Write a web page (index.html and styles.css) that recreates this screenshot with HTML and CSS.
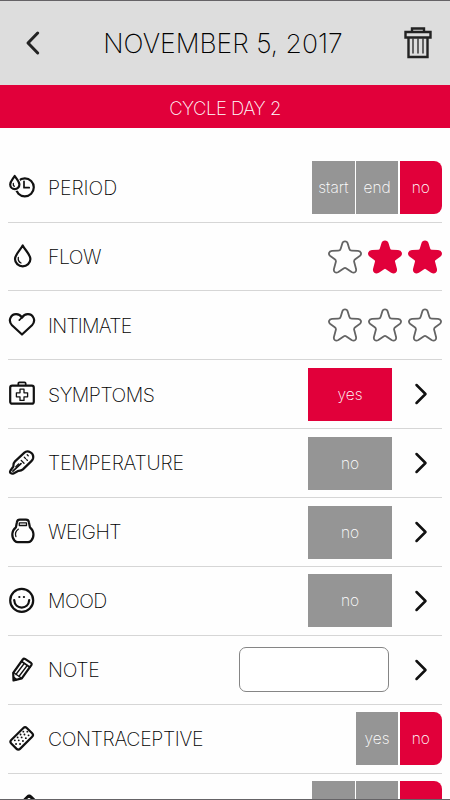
FILE: index.html
```
<!doctype html>
<html lang="en">
<head>
  <meta charset="UTF-8">
  <meta name="viewport" content="width=device-width, initial-scale=1.0">
  <title>Cycle day</title>
  <link rel="stylesheet" href="styles.css">
</head>
<body>
<!-- Shapes used in several rows -->
<svg class="sprite">
  <symbol id="star" viewBox="0 0 34 34">
    <path d="M14.3 3.4C15.1.6 18.9.6 19.7 3.4L21.3 8.8Q21.8 10.7 23.8 10.7L30 10.9C33.2 11.2 34 14.2 31.7 16L27.2 19.2Q25.7 20.3 26.2 22.1L28 28.8C28.8 31.8 26.4 33.6 23.6 32L18.4 28.4Q17 27.5 15.6 28.4L10.4 32C7.6 33.6 5.2 31.8 6 28.8L7.8 22.1Q8.3 20.3 6.8 19.2L2.3 16C0 14.2.8 11.2 4 10.9L10.2 10.7Q12.2 10.7 12.7 8.8Z"/>
  </symbol>
  <symbol id="next" viewBox="0 0 14 22">
    <path d="M2.500 2 11.500 11 2.500 20"/>
  </symbol>
</svg>

<div class="screen">
  <header class="header">
    <svg class="header__back" viewBox="0 0 16 26"><path d="M12.700 3 3 13l9.700 10"/></svg>
    <h1 class="header__title">NOVEMBER 5, 2017</h1>
    <svg class="header__trash" viewBox="0 0 30 34">
      <path d="M9 6V2.500h12V6M2.500 6h25v5.500h-25zM5.500 11.500h19v19.500h-19z"/>
      <path class="thin" d="M10 13v14M15 13v14M20 13v14"/>
    </svg>
  </header>
  <div class="cycle">CYCLE DAY 2</div>

  <ul class="list">
    <li class="row">
      <svg class="icon" viewBox="0 0 28 28">
        <circle cx="16.800" cy="13.300" r="9"/>
        <path class="halo" d="M6.700 2C5 5 2.200 7.500 2.200 10.500a4.600 4.600 0 0 0 9.200 0C11.400 7.500 8.500 5 6.700 2z"/>
        <path d="M6.700 2C5 5 2.200 7.500 2.200 10.500a4.600 4.600 0 0 0 9.200 0C11.400 7.500 8.500 5 6.700 2z"/>
        <path class="thin" d="M5.300 9.500q-.3 2 1 2.800"/>
        <path class="mid" d="M16 7.300v6.400h5.200"/>
      </svg>
      <span class="row__label period">PERIOD</span>
      <div class="group">
        <span class="btn">start</span>
        <span class="btn">end</span>
        <span class="btn btn--on">no</span>
      </div>
    </li>
    <li class="row">
      <svg class="icon" viewBox="0 0 28 28">
        <path d="M14.700 2.400C12.500 7 7 11.600 7 16a7.700 7.300 0 0 0 15.400 0C22.400 11.600 17 7 14.700 2.400z"/>
        <path class="thin" d="M10.300 14.500q-.5 4 2.700 5.500"/>
      </svg>
      <span class="row__label">FLOW</span>
      <div class="stars">
        <svg class="star"><use href="#star"/></svg>
        <svg class="star star--on"><use href="#star"/></svg>
        <svg class="star star--on"><use href="#star"/></svg>
      </div>
    </li>
    <li class="row">
      <svg class="icon" viewBox="0 0 28 28">
        <path d="M14 23.500 4 14.200C-.5 9.500 3 3 8.200 3.100c2.600 0 4.500 1.300 5.800 3.500 1.300-2.200 3.200-3.500 5.800-3.500C25 3 28.500 9.500 24 14.200z"/>
        <path class="mid" d="M14 6.500 11.300 9.200"/>
      </svg>
      <span class="row__label intimate">INTIMATE</span>
      <div class="stars">
        <svg class="star"><use href="#star"/></svg>
        <svg class="star"><use href="#star"/></svg>
        <svg class="star"><use href="#star"/></svg>
      </div>
    </li>
    <li class="row">
      <svg class="icon" viewBox="0 0 28 28">
        <rect x="2.200" y="5.700" width="23.600" height="18" rx="2"/>
        <path class="mid" d="M10.300 5V3.500q0-1.200 1.200-1.200h5q1.200 0 1.200 1.200V5"/>
        <path class="thin" d="M12 9.200h4v3.600h3.600v4H16v3.600h-4v-3.600H8.400v-4H12z"/>
      </svg>
      <span class="row__label">SYMPTOMS</span>
      <span class="btn btn--wide btn--on">yes</span>
      <svg class="next"><use href="#next"/></svg>
    </li>
    <li class="row">
      <svg class="icon" viewBox="0 0 28 28">
        <path d="M2.500 21.500 5.400 17.500Q5.200 14.200 7 12.400L16.400 3.600c3.300-3 10.100.4 8.600 6-.3 1-1 1.900-1.600 2.500L14.900 20.400q-1.700 1.500-4.400 1.400L6 24.200c-2.500 1.300-4.900-.5-3.500-2.700z"/>
        <path class="mid" d="M4.900 22.200 13 14.600"/>
        <path class="thin" d="M7.800 17.800l2.800-2.800M13.200 11.400l2.800 2.900M16.300 8.300l1.300 1.300M18.700 10.700l.7.700M19.200 5.800l1 1"/>
      </svg>
      <span class="row__label temperature">TEMPERATURE</span>
      <span class="btn btn--wide">no</span>
      <svg class="next"><use href="#next"/></svg>
    </li>
    <li class="row">
      <svg class="icon" viewBox="0 0 28 28">
        <path d="M7.900 9.300 8.900 4.200Q9.300 1.700 11.800 1.700h6.200q2.500 0 2.900 2.500l1 5.100c4.400 3.500 4.700 9.800 1.100 13.600-.9.900-1.800 1.300-3 1.300H9.800c-1.200 0-2.100-.4-3-1.300C3.200 19.100 3.400 12.800 7.900 9.300z"/>
        <path class="thin" d="M11.300 4.900h7.200v2.600h-7.200zM10.300 11.200C7.400 13.200 7 16 7.900 18.600"/>
      </svg>
      <span class="row__label">WEIGHT</span>
      <span class="btn btn--wide">no</span>
      <svg class="next"><use href="#next"/></svg>
    </li>
    <li class="row">
      <svg class="icon" viewBox="0 0 28 28">
        <circle cx="13.700" cy="13.400" r="11.500"/>
        <path d="M6.200 13.200c.7 9.800 14.300 9.800 15 0"/>
        <path d="M11.300 10h.1M15.900 10h.1"/>
      </svg>
      <span class="row__label">MOOD</span>
      <span class="btn btn--wide">no</span>
      <svg class="next"><use href="#next"/></svg>
    </li>
    <li class="row">
      <svg class="icon" viewBox="0 0 28 28">
        <path d="M5.200 16.800 14.800 3.500q.8-1.200 2.200-.6l6 3.900q1.200.9.500 2.100L13.800 22.400 5.500 24.500z"/>
        <path class="mid" d="M13.700 5.500 21.900 11.200M5.800 21.300l2.700 2.400"/>
        <path class="thin" d="M5.600 16.500l8 5.700M16.200 7.500 7.900 18.500M19.200 9.500l-8.300 11"/>
      </svg>
      <span class="row__label note">NOTE</span>
      <span class="field"></span>
      <svg class="next"><use href="#next"/></svg>
    </li>
    <li class="row">
      <svg class="icon" viewBox="0 0 28 28">
        <rect x="2.700" y="7.200" width="22" height="12.400" rx="2.400" transform="rotate(-45 13.700 13.400)"/>
        <path class="dots" d="M15.300 6.700h.1M19.300 6.700h.1M12.500 9.500h.1M16.400 9.500h.1M20.500 10.300h.1M9.600 12.400h.1M13.600 12.400h.1M17.800 13.200h.1M6.800 15.300h.1M10.700 15.300h.1M14.900 16h.1M8 19h.1M12 19h.1"/>
      </svg>
      <span class="row__label contraceptive">CONTRACEPTIVE</span>
      <div class="group">
        <span class="btn">yes</span>
        <span class="btn btn--on">no</span>
      </div>
    </li>
    <li class="row">
      <svg class="icon" viewBox="0 0 28 28">
        <rect x="6" y="7" width="22" height="10" rx="3" transform="rotate(-45 17 12)"/>
        <path d="M17 5.500l4-3.500 4 3.500"/>
      </svg>
      <span class="row__label"></span>
      <div class="group">
        <span class="btn"></span>
        <span class="btn"></span>
        <span class="btn btn--on"></span>
      </div>
    </li>
  </ul>
</div>
</body>
</html>
```
FILE: styles.css
```
body {
  margin: 0;
  background-color: #fefefe;
  font-family: Inter, "Liberation Sans", sans-serif;
  font-weight: 200;
  color: #000;
}

svg {
  display: block;
  flex: none;
  fill: none;
  stroke: #111;
  stroke-width: 2.2;
  stroke-linecap: round;
  stroke-linejoin: round;
}

.sprite {
  position: absolute;
  width: 0;
  height: 0;
}

.screen {
  box-sizing: border-box;
  height: 800px;
  overflow: hidden;
  border-top: 1px solid #656366;
  border-bottom: 1px solid #656366;
}

/* Header */

.header {
  display: flex;
  align-items: center;
  justify-content: space-between;
  height: 84px;
  padding: 0 17px 0 25px;
  background-color: #ddd;
}

.header__back {
  width: 16px;
  height: 26px;
  stroke: #222;
  stroke-width: 3;
}

.header__title {
  margin: 0 0 0 2px;
  font-size: 26.5px;
  font-weight: 200;
  letter-spacing: 0;
  white-space: nowrap;
}

.header__trash {
  width: 30px;
  height: 34px;
  stroke: #222;
  stroke-width: 2.4;
  stroke-linejoin: miter;
}

.cycle {
  height: 43px;
  line-height: 46px;
  font-size: 18.5px;
  letter-spacing: -.5px;
  text-align: center;
  color: #fff;
  background-color: #e1003a;
}

/* List */

.list {
  margin: 0;
  padding: 25.7px 8px 0;
  list-style: none;
}

.row {
  display: flex;
  align-items: center;
  box-sizing: border-box;
  height: 68.9px;
  border-bottom: 1px solid #d6d6d6;
}

.row__label {
  flex: 1;
  margin-left: 12px;
  padding-top: .5px;
  font-size: 19.5px;
  letter-spacing: -.5px;
}

.period {
  letter-spacing: -.05px;
}

.intimate {
  letter-spacing: -.75px;
}

.temperature {
  letter-spacing: -.22px;
}

.note {
  letter-spacing: -.3px;
}

.contraceptive {
  letter-spacing: -.35px;
}

.icon {
  width: 28px;
  height: 28px;
}

.icon .mid {
  stroke-width: 1.7;
}

.thin {
  stroke-width: 1.3;
}

.icon .halo {
  fill: #fefefe;
  stroke: #fefefe;
  stroke-width: 4;
}

.icon .dots {
  stroke-width: 1.8;
}

/* Buttons */

.group {
  display: flex;
  gap: 1.2px;
}

.btn {
  width: 42.5px;
  height: 53px;
  line-height: 54px;
  font-size: 15.5px;
  text-align: center;
  color: #fff;
  background-color: #959595;
}

.btn--on {
  background-color: #e1003a;
}

.group .btn:last-child {
  border-radius: 0 8px 8px 0;
}

.btn--wide {
  width: 84px;
}

.field {
  box-sizing: border-box;
  width: 150px;
  height: 45px;
  margin-right: 3px;
  border: 1px solid #858585;
  border-radius: 7px;
  background-color: #fff;
}

.next {
  width: 14px;
  height: 22px;
  margin: 0 14px 0 22px;
  stroke-width: 2.5;
}

/* Stars */

.stars {
  display: flex;
  gap: 6px;
  margin-right: .4px;
}

.star {
  width: 34px;
  height: 34px;
  stroke: #646464;
  stroke-width: 1.8;
}

.star--on {
  fill: #e1003a;
  stroke: #e1003a;
}
```
